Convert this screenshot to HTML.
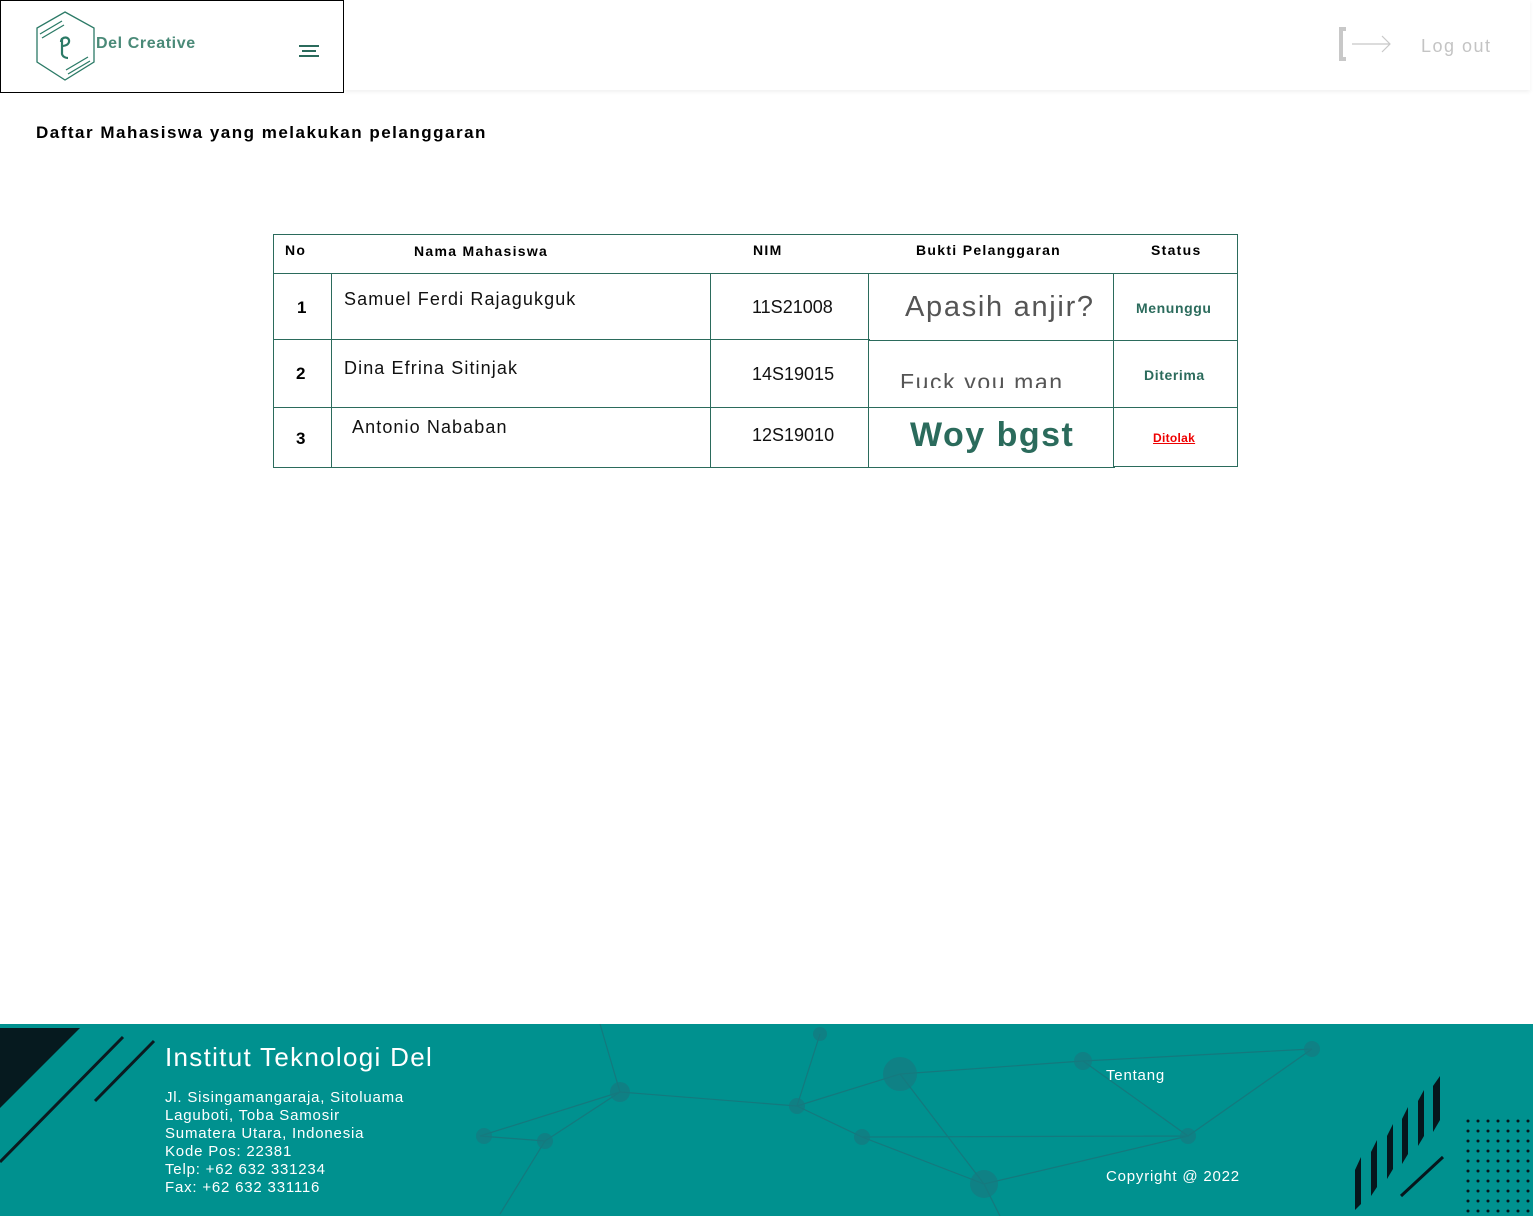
<!DOCTYPE html>
<html><head><meta charset="utf-8"><style>
*{margin:0;padding:0;box-sizing:border-box}
body{width:1533px;height:1216px;position:relative;background:#fff;font-family:"Liberation Sans",sans-serif;overflow:hidden;color:#000}
.a{position:absolute}
.c{position:absolute;border:1.5px solid #2b6b5c;background:#fff}
.h{position:absolute;font-weight:bold;font-size:14px;top:242px;letter-spacing:1.3px}
.n{font-weight:bold;font-size:17px}
.t{font-size:18px;color:#111;letter-spacing:1.1px}
.f{color:#fff;letter-spacing:.8px}
</style></head><body>
<div class="a" style="left:344px;top:0;width:1186px;height:90px;box-shadow:0 2px 4px rgba(0,0,0,.06)"></div>
<div class="a" style="left:0;top:0;width:344px;height:93px;border:1.5px solid #000;background:#fff"></div>
<svg class="a" style="left:34px;top:10px" width="64" height="74" viewBox="0 0 64 74">
<g fill="none" stroke="#2b7a66" stroke-width="1.3">
<polygon points="31,2 60,18 60,52 31,70 3,52 3,18"/>
<path d="M6,24 L28,11 M8,28 L30,15 M34,64 L56,51 M32,60 L54,47"/>
<path d="M27,32 C27,26 36,26 35,32 C34,36 28,36 28,36 M28,28 L28,44 C29,48 34,48 34,48" stroke-width="2.2"/>
</g></svg>
<div class="a" style="left:96px;top:35px;font-size:16px;font-weight:bold;color:#4a8a78;letter-spacing:.6px">Del Creative</div>
<div class="a" style="left:299px;top:45px;width:20px;height:2px;background:#2b6b5c"></div>
<div class="a" style="left:302px;top:50px;width:14px;height:2px;background:#2b6b5c"></div>
<div class="a" style="left:299px;top:55px;width:20px;height:2px;background:#2b6b5c"></div>
<svg class="a" style="left:1338px;top:26px" width="56" height="36"><path d="M8,3 H3 V33 H8" fill="none" stroke="#c8c8c8" stroke-width="4"/><path d="M14,18 H52 M44,10 L52,18 L44,26" fill="none" stroke="#c8c8c8" stroke-width="1.2"/></svg>
<div class="a" style="left:1421px;top:36px;font-size:18px;color:#c4c4c4;letter-spacing:1.5px">Log out</div>
<div class="a" style="left:36px;top:123px;font-size:17px;font-weight:bold;letter-spacing:1.5px">Daftar Mahasiswa yang melakukan pelanggaran</div>

<div class="c" style="left:273px;top:234px;width:965px;height:40px"></div>
<div class="h" style="left:285px">No</div>
<div class="h" style="left:414px;top:243px">Nama Mahasiswa</div>
<div class="h" style="left:753px">NIM</div>
<div class="h" style="left:916px">Bukti Pelanggaran</div>
<div class="h" style="left:1151px">Status</div>

<div class="c" style="left:273px;top:273px;width:60px;height:68px"></div>
<div class="c" style="left:331px;top:273px;width:381px;height:67px"></div>
<div class="c" style="left:710px;top:273px;width:160px;height:67px"></div>
<div class="c" style="left:868px;top:273px;width:247px;height:68px"></div>
<div class="c" style="left:1113px;top:273px;width:125px;height:68px"></div>

<div class="c" style="left:273px;top:339px;width:60px;height:70px"></div>
<div class="c" style="left:331px;top:339px;width:381px;height:70px"></div>
<div class="c" style="left:710px;top:339px;width:160px;height:70px"></div>
<div class="c" style="left:868px;top:340px;width:247px;height:68px"></div>
<div class="c" style="left:1113px;top:340px;width:125px;height:68px"></div>

<div class="c" style="left:273px;top:407px;width:60px;height:61px"></div>
<div class="c" style="left:331px;top:407px;width:381px;height:61px"></div>
<div class="c" style="left:710px;top:407px;width:160px;height:61px"></div>
<div class="c" style="left:868px;top:407px;width:247px;height:61px"></div>
<div class="c" style="left:1113px;top:407px;width:125px;height:60px"></div>

<div class="a n" style="left:297px;top:298px">1</div>
<div class="a n" style="left:296px;top:364px">2</div>
<div class="a n" style="left:296px;top:429px">3</div>
<div class="a t" style="left:344px;top:289px">Samuel Ferdi Rajagukguk</div>
<div class="a t" style="left:344px;top:358px">Dina Efrina Sitinjak</div>
<div class="a t" style="left:352px;top:417px">Antonio Nababan</div>
<div class="a t" style="left:752px;top:297px;letter-spacing:0">11S21008</div>
<div class="a t" style="left:752px;top:364px;letter-spacing:0">14S19015</div>
<div class="a t" style="left:752px;top:425px;letter-spacing:0">12S19010</div>
<div class="a" style="left:905px;top:291px;font-size:29px;color:#555;letter-spacing:1.7px">Apasih anjir?</div>
<div class="a" style="left:900px;top:369px;font-size:23px;color:#555;height:19px;overflow:hidden;line-height:27px;letter-spacing:1.6px">Fuck you man</div>
<div class="a" style="left:910px;top:416px;font-size:34px;font-weight:bold;color:#2b6b5c;letter-spacing:1.5px">Woy bgst</div>
<div class="a" style="left:1136px;top:300px;font-size:14px;font-weight:bold;color:#2b6b5c;letter-spacing:.6px">Menunggu</div>
<div class="a" style="left:1144px;top:367px;font-size:14px;font-weight:bold;color:#2b6b5c;letter-spacing:.6px">Diterima</div>
<div class="a" style="left:1153px;top:431px;font-size:12px;font-weight:bold;color:#e00;text-decoration:underline;letter-spacing:.3px">Ditolak</div>

<div class="a" style="left:0;top:1024px;width:1533px;height:192px;background:#00918f;overflow:hidden">
<svg class="a" style="left:0;top:0" width="1533" height="192">
<g stroke="#1d6f76" stroke-width="1.2" opacity=".7" fill="none">
<path d="M480,112 L620,68 L797,82 L900,50 L1083,37 L1312,25 M797,82 L862,113 L1188,112 L1312,25 M900,50 L984,160 L1188,112 M620,68 L545,117 L480,112 M862,113 L984,160 M820,10 L797,82 M1083,37 L1188,112 M545,117 L500,190 M984,160 L1000,192 M620,68 L600,0"/>
</g>
<g fill="#167a80" opacity=".7">
<circle cx="900" cy="50" r="17"/><circle cx="797" cy="82" r="8"/><circle cx="862" cy="113" r="8"/><circle cx="984" cy="160" r="14"/><circle cx="1083" cy="37" r="9"/><circle cx="1188" cy="112" r="8"/><circle cx="1312" cy="25" r="8"/><circle cx="620" cy="68" r="10"/><circle cx="545" cy="117" r="8"/><circle cx="484" cy="112" r="8"/><circle cx="820" cy="10" r="7"/>
</g>
<polygon points="0,4 80,4 0,84" fill="#061a1f"/>
<path d="M0,138 L123,13 M95,77 L154,17" stroke="#0b1a20" stroke-width="3"/>
<g fill="#06161c">
<polygon points="1355,146 1361,133 1361,180 1355,186"/><polygon points="1371,128 1377,116 1377,163 1371,172"/><polygon points="1387,112 1393,100 1393,145 1387,155"/><polygon points="1402,95 1408,83 1408,130 1402,140"/><polygon points="1418,77 1424,66 1424,112 1418,122"/><polygon points="1433,62 1440,52 1440,96 1433,108"/>
</g>
<path d="M1401,172 L1443,133" stroke="#06161c" stroke-width="3"/>
<defs><pattern id="d" x="1466" y="95" width="10" height="10" patternUnits="userSpaceOnUse"><circle cx="2" cy="2" r="1.5" fill="#06161c"/></pattern></defs>
<rect x="1466" y="92" width="70" height="100" fill="url(#d)"/>
</svg>
<div class="a f" style="left:165px;top:18px;font-size:26px;letter-spacing:1.3px">Institut Teknologi Del</div>
<div class="a f" style="left:165px;top:65px;font-size:15px;line-height:18px">Jl. Sisingamangaraja, Sitoluama<br>Laguboti, Toba Samosir<br>Sumatera Utara, Indonesia<br>Kode Pos: 22381<br>Telp: +62 632 331234<br>Fax: +62 632 331116</div>
<div class="a f" style="left:1106px;top:43px;font-size:15px">Tentang</div>
<div class="a f" style="left:1106px;top:144px;font-size:15px">Copyright @ 2022</div>
</div>
</body></html>
